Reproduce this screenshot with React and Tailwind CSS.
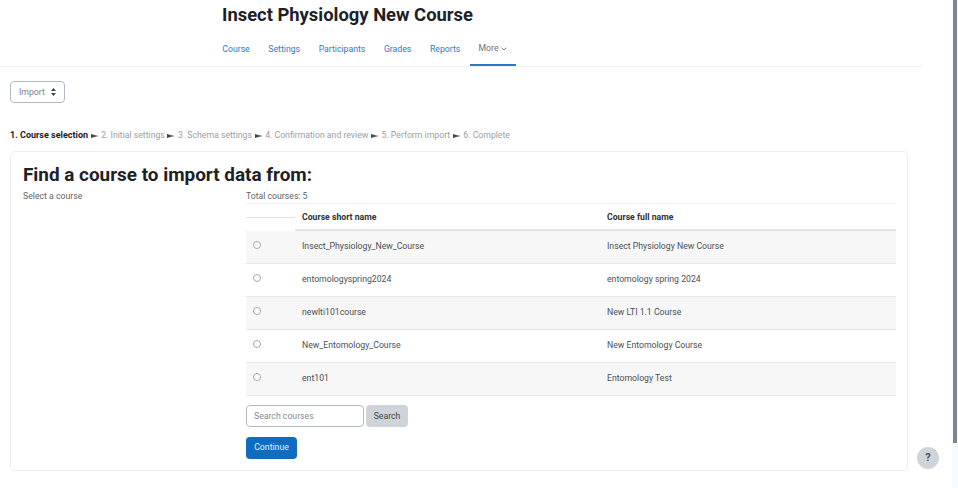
const tabs = ["Course", "Settings", "Participants", "Grades", "Reports"];

const steps = [
  "2. Initial settings",
  "3. Schema settings",
  "4. Confirmation and review",
  "5. Perform import",
  "6. Complete",
];

const courses = [
  { shortName: "Insect_Physiology_New_Course", fullName: "Insect Physiology New Course" },
  { shortName: "entomologyspring2024", fullName: "entomology spring 2024" },
  { shortName: "newlti101course", fullName: "New LTI 1.1 Course" },
  { shortName: "New_Entomology_Course", fullName: "New Entomology Course" },
  { shortName: "ent101", fullName: "Entomology Test" },
];

function Arrow() {
  return (
    <svg width="8" height="6" viewBox="0 0 8 6" className="mx-[2.6px] shrink-0">
      <path d="M0 1 L4 2.2 L8 3 L4 3.8 L0 5 Z" fill="#3f474e" />
    </svg>
  );
}

export default function App() {
  return (
    <div className="flex h-[488px] w-[958px] overflow-hidden bg-white font-['Roboto',sans-serif] text-[8.7px] text-[#4a5056]">
      <div className="relative w-[952px] shrink-0">
        {/* Course header */}
        <div className="w-[922px] border-b border-[#f0f1f2]">
          <h1 className="pl-[222px] pt-[2px] text-[18.4px] leading-[25px] font-bold text-[#1d2125]">
            Insect Physiology New Course
          </h1>
          <nav className="mt-[5px] flex h-[34px] pl-[213px]">
            {tabs.map((tab) => (
              <a key={tab} className="flex items-center px-[9.3px] pt-[1px] text-[#2f7bc9]">
                {tab}
              </a>
            ))}
            <a className="flex items-center gap-[2px] border-b-2 border-[#2b78c6] px-[9px] pt-[2px] text-[#6a7076]">
              More
              <svg width="6" height="4" viewBox="0 0 6 4" fill="none" stroke="#6a7076" strokeWidth="0.9">
                <path d="M0.7 0.7 L3 3 L5.3 0.7" />
              </svg>
            </a>
          </nav>
        </div>

        <div className="pl-[10px]">
          <button className="mt-[14px] flex h-[22px] w-[55px] items-center justify-between rounded-[4px] border border-[#b4bac0] pl-[8px] pr-[8px] text-[#7b8187]">
            <span className="pt-[2px]">Import</span>
            <svg width="5" height="8" viewBox="0 0 5 8" fill="#3f474e">
              <path d="M2.5 0 L5 3 H0 Z M2.5 8 L5 5 H0 Z" />
            </svg>
          </button>

          {/* Import steps */}
          <div className="mt-[26px] flex h-[14px] items-center text-[#9aa0a6]">
            <b className="text-[9px] font-bold text-[#1d2125]">1. Course selection</b>
            {steps.map((step) => (
              <span key={step} className="flex items-center">
                <Arrow />
                {step}
              </span>
            ))}
          </div>

          {/* Search card */}
          <div className="mt-[8px] h-[320px] w-[898px] rounded-[5px] border border-[#eceef0] pl-[12px] pr-[11px]">
            <h2 className="pt-[10px] text-[18.9px] leading-[25px] font-bold text-[#1d2125]">
              Find a course to import data from:
            </h2>
            <div className="flex pt-[1px]">
              <div className="w-[223px] shrink-0 pt-[1px] leading-[14px] text-[#5f656b]">Select a course</div>
              <div className="w-[651px]">
                <div className="pt-[1px] leading-[14px] text-[#5f656b]">Total courses: 5</div>
                <div className="flex h-[28px] border-t border-[#eef0f1] font-bold text-[#2d3237]">
                  <div className="flex w-[49px] items-center">
                    <div className="h-[1px] w-full bg-[#dfe3e6]" />
                  </div>
                  <div className="flex w-[7px] border-b-2 border-[#e3e5e7]" />
                  <div className="flex w-[305px] items-center border-b-2 border-[#e3e5e7] pt-[2px]">Course short name</div>
                  <div className="flex flex-1 items-center border-b-2 border-[#e3e5e7] pt-[2px]">Course full name</div>
                </div>
                {courses.map((course, i) => (
                  <div
                    key={course.shortName}
                    className={`flex h-[33px] items-center border-b border-[#e6e8ea] ${i % 2 === 0 ? "bg-[#f7f7f7]" : "bg-white"}`}
                  >
                    <div className="flex w-[56px] pb-[4px] pl-[7px]">
                      <span className="h-[8px] w-[8px] rounded-full border border-[#a3a9ae] bg-white" />
                    </div>
                    <div className="w-[305px]">{course.shortName}</div>
                    <div>{course.fullName}</div>
                  </div>
                ))}
                <div className="mt-[9px] flex gap-[2px]">
                  <div className="flex h-[22px] w-[118px] items-center rounded-[4px] border border-[#b4bac0] pl-[7px] pt-[2px] text-[#858b91]">
                    Search courses
                  </div>
                  <button className="h-[22px] w-[42px] rounded-[4px] bg-[#ced4da] pt-[1px] text-[#40464c]">Search</button>
                </div>
                <button className="mt-[10px] h-[22px] w-[51px] rounded-[4px] bg-[#0f6cbf] text-[#e8f1f9]">Continue</button>
              </div>
            </div>
          </div>
        </div>

        {/* Help button floats over the page */}
        <button className="absolute left-[917px] top-[447px] flex h-[22px] w-[22px] items-center justify-center rounded-full bg-[#ced4da] text-[11px] font-bold text-[#4a5056]">
          ?
        </button>
      </div>

      {/* Window scrollbar */}
      <div className="w-[6px] bg-[#f8f9fa]">
        <div className="ml-[1px] h-[443px] w-[4px] bg-[#7d868f]" />
      </div>
    </div>
  );
}
